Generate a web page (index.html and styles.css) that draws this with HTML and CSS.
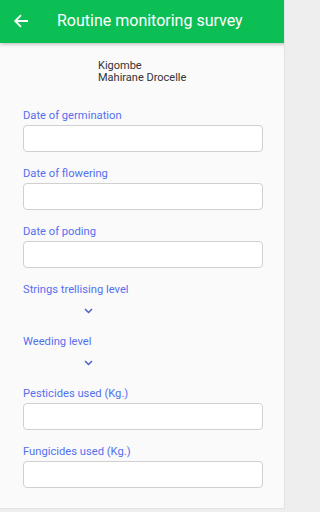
FILE: index.html
```html
<!DOCTYPE html>
<html>
<head>
<meta charset="utf-8">
<link rel="stylesheet" href="styles.css">
</head>
<body>
<div class="screen">
  <header class="appbar">
    <svg class="back" width="16" height="16" viewBox="0 0 16 16"><path d="M15 8H2.5M8 2.2L2.2 8L8 13.8" fill="none" stroke="#fff" stroke-width="1.8"/></svg>
    <h1 class="title">Routine monitoring survey</h1>
  </header>
  <main class="form">
    <div class="farmer">
      <div>Kigombe</div>
      <div>Mahirane Drocelle</div>
    </div>
    <div class="field">
      <label class="label">Date of germination</label>
      <div class="input"></div>
    </div>
    <div class="field">
      <label class="label">Date of flowering</label>
      <div class="input"></div>
    </div>
    <div class="field">
      <label class="label">Date of poding</label>
      <div class="input"></div>
    </div>
    <div class="field">
      <label class="label">Strings trellising level</label>
      <div class="select"><svg width="9" height="6" viewBox="0 0 9 6"><path d="M1 1l3.5 3.5L8 1" fill="none" stroke="#4a5fc4" stroke-width="1.5"/></svg></div>
    </div>
    <div class="field">
      <label class="label">Weeding level</label>
      <div class="select"><svg width="9" height="6" viewBox="0 0 9 6"><path d="M1 1l3.5 3.5L8 1" fill="none" stroke="#4a5fc4" stroke-width="1.5"/></svg></div>
    </div>
    <div class="field">
      <label class="label">Pesticides used (Kg.)</label>
      <div class="input"></div>
    </div>
    <div class="field">
      <label class="label">Fungicides used (Kg.)</label>
      <div class="input"></div>
    </div>
  </main>
</div>
</body>
</html>
```
FILE: styles.css
```css
html, body {
  margin: 0;
  padding: 0;
  background: #eeeeee;
  font-family: Roboto, "Liberation Sans", sans-serif;
}
.screen {
  width: 285px;
  height: 509px;
  background: #fafafa;
  border-right: 1px solid #e2e2e2;
  border-bottom: 1px solid #e2e2e2;
  box-sizing: border-box;
  overflow: hidden;
}
.appbar {
  height: 43px;
  background: #0cbf55;
  display: flex;
  align-items: center;
  padding-left: 13px;
  box-shadow: 0 1px 4px rgba(0,0,0,0.28);
  position: relative;
  width: 288px;
  box-sizing: border-box;
}
.back {
  display: block;
  margin-top: -1px;
}
.title {
  margin: -2px 0 0 28px;
  font-size: 16px;
  font-weight: 400;
  color: #fff;
  line-height: 20px;
}
.form {
  padding: 17px 21px 0 23px;
  display: flex;
  flex-direction: column;
}
.farmer {
  padding-left: 75px;
  font-size: 11px;
  line-height: 12px;
  color: #333;
  margin-bottom: 24px;
}
.field {
  display: flex;
  flex-direction: column;
  margin-bottom: 14px;
}
.label {
  font-size: 11.2px;
  line-height: 13px;
  color: #5470f0;
  padding-top: 1px;
  margin-bottom: 3px;
}
.input {
  height: 25px;
  background: #fff;
  border: 1px solid #d0d0d0;
  border-radius: 4px;
}
.select {
  height: 21px;
  padding-left: 61px;
  padding-top: 1px;
  margin-bottom: -1px;
  display: flex;
  align-items: center;
}
.select svg {
  display: block;
}
```
